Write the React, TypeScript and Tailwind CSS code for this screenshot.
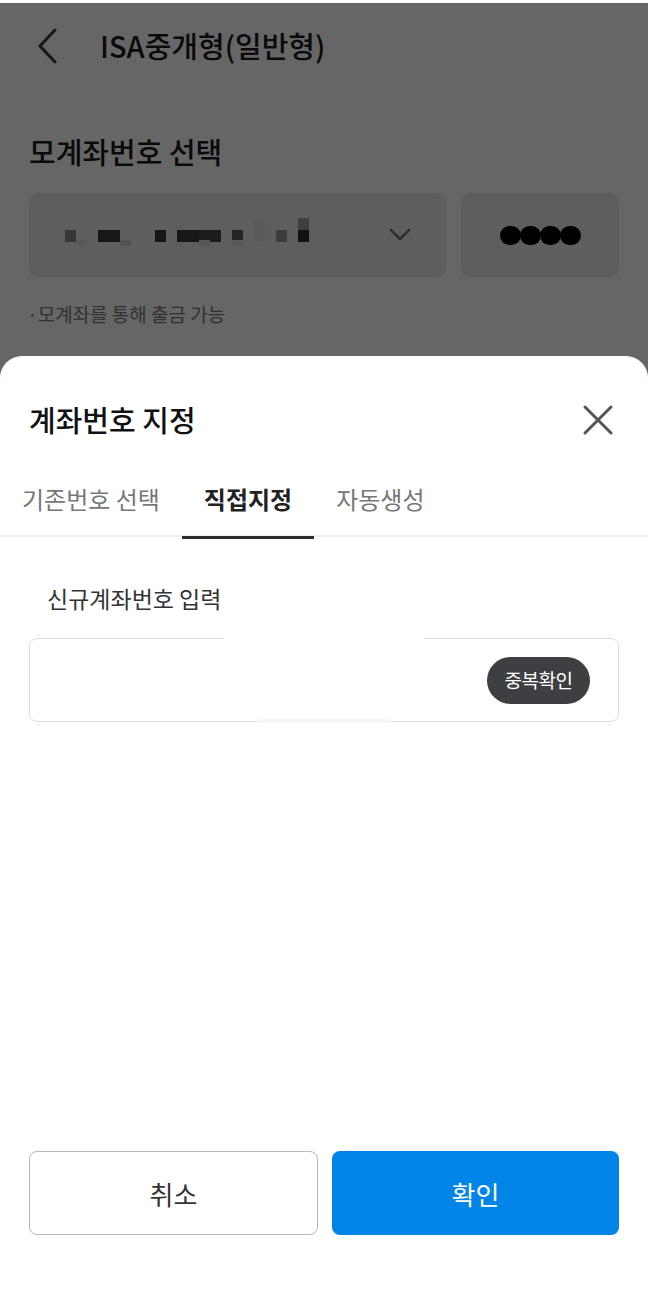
import { useState } from 'react';

const tabs = ['기존번호 선택', '직접지정', '자동생성'];

const App = () => {
  const [tab, setTab] = useState(1);

  return (
    <div className="relative h-[1293px] w-[648px] overflow-hidden bg-white font-['Noto_Sans_CJK_KR',sans-serif] text-[#1a1a1a]">
      {/* page behind the sheet */}
      <div className="pt-[3px]">
        <header className="flex h-[86px] items-center">
          <button type="button" className="ml-[36px] flex h-[40px] w-[24px] items-center">
            <svg width="22" height="36" viewBox="0 0 22 36" fill="none">
              <path d="M19 2 L4 18 L19 34" stroke="#3a3a3a" strokeWidth="3" strokeLinecap="round" strokeLinejoin="round" />
            </svg>
          </button>
          <h1 className="ml-[40px] text-[29px] font-medium">ISA중개형(일반형)</h1>
        </header>

        <section className="px-[29px] pt-[42px]">
          <h2 className="text-[29px] font-medium leading-[40px]">모계좌번호 선택</h2>
          <div className="mt-[22px] flex gap-[15px]">
            <div className="flex h-[84px] flex-1 items-center justify-between rounded-[8px] bg-[#ececec] pl-[36px] pr-[34px]">
              <svg width="250" height="34" viewBox="0 0 250 34">
                <rect x="0" y="12" width="11" height="12" fill="#8a8a8a" />
                <rect x="11" y="22" width="11" height="6" fill="#dcdcdc" />
                <rect x="33" y="12" width="22" height="12" fill="#3a3a3a" />
                <rect x="55" y="22" width="11" height="6" fill="#cfcfcf" />
                <rect x="90" y="12" width="11" height="12" fill="#3a3a3a" />
                <rect x="112" y="12" width="22" height="12" fill="#3a3a3a" />
                <rect x="134" y="12" width="22" height="12" fill="#4a4a4a" />
                <rect x="134" y="22" width="11" height="6" fill="#d6d6d6" />
                <rect x="167" y="12" width="11" height="12" fill="#5a5a5a" />
                <rect x="167" y="22" width="11" height="6" fill="#dadada" />
                <rect x="189" y="2" width="11" height="22" fill="#e2e2e2" />
                <rect x="211" y="12" width="11" height="12" fill="#9a9a9a" />
                <rect x="233" y="0" width="11" height="12" fill="#9c9c9c" />
                <rect x="233" y="12" width="11" height="12" fill="#2e2e2e" />
              </svg>
              <svg width="24" height="16" viewBox="0 0 24 16" fill="none">
                <path d="M3 3 L12 12 L21 3" stroke="#707070" strokeWidth="2.5" strokeLinecap="round" strokeLinejoin="round" />
              </svg>
            </div>
            <div className="flex h-[84px] w-[158px] items-center justify-center rounded-[8px] bg-[#ececec]">
              <div className="flex">
                {[0, 1, 2, 3].map((i) => (
                  <span key={i} className="-mx-[0.5px] h-[19px] w-[21px] rounded-full bg-black" />
                ))}
              </div>
            </div>
          </div>
          <p className="-ml-[2px] mt-[23px] text-[19px] leading-[28px] text-[#7a7a7a]">·모계좌를 통해 출금 가능</p>
        </section>
      </div>

      {/* dim overlay */}
      <div className="absolute inset-x-0 bottom-0 top-[3px] bg-black/60" />

      {/* bottom sheet */}
      <div className="absolute inset-x-0 bottom-0 top-[356px] flex flex-col rounded-t-[22px] bg-white">
        <div className="flex h-[128px] items-center justify-between pl-[29px] pr-[34px]">
          <h2 className="text-[29px] font-medium text-[#111]">계좌번호 지정</h2>
          <button type="button" className="flex h-[32px] w-[32px] items-center justify-center">
            <svg width="32" height="32" viewBox="0 0 32 32" fill="none">
              <path d="M3 3 L29 29 M29 3 L3 29" stroke="#555" strokeWidth="3" strokeLinecap="round" />
            </svg>
          </button>
        </div>
        <div className="-mt-[3px] flex h-[56px] border-b-[2px] border-[#eef0f0]">
          {tabs.map((t, i) => (
            <button
              key={t}
              type="button"
              onClick={() => setTab(i)}
              className={`-mb-[2px] flex h-[58px] items-start px-[22px] text-[24px] ${
                tab === i ? 'border-b-[3px] border-[#2b2b2b] font-bold text-[#222]' : 'border-b-[3px] border-transparent text-[#777]'
              }`}
            >
              {t}
            </button>
          ))}
        </div>

        <div className="px-[29px]">
          <p className="mt-[45px] pl-[18px] text-[23px] leading-[32px] text-[#333]">신규계좌번호 입력</p>
          <div className="relative mt-[24px] flex h-[84px] items-center justify-end rounded-[8px] border-[1.5px] border-[#dcdfe2] pr-[28px]">
            <input className="h-full flex-1 bg-transparent pl-[20px] text-[22px] outline-none" />
            <button type="button" className="flex h-[47px] w-[103px] items-center justify-center rounded-full bg-[#3e3f42] text-[19px] tracking-[-0.5px] text-white">
              중복확인
            </button>
            <div className="absolute -top-[2px] left-[194px] h-[4px] w-[200px] bg-white" />
            <div className="absolute -bottom-[2px] left-[228px] h-[4px] w-[132px] bg-[#f7f7f7]" />
          </div>
        </div>

        <div className="mt-auto flex gap-[14px] px-[29px] pb-[58px]">
          <button type="button" className="h-[84px] flex-1 rounded-[8px] border-[1.5px] border-[#b9b9b9] text-[26px] text-[#333]">
            취소
          </button>
          <button type="button" className="h-[84px] flex-1 rounded-[8px] bg-[#0084e8] text-[26px] text-white">
            확인
          </button>
        </div>
      </div>
    </div>
  );
};

export default App;
